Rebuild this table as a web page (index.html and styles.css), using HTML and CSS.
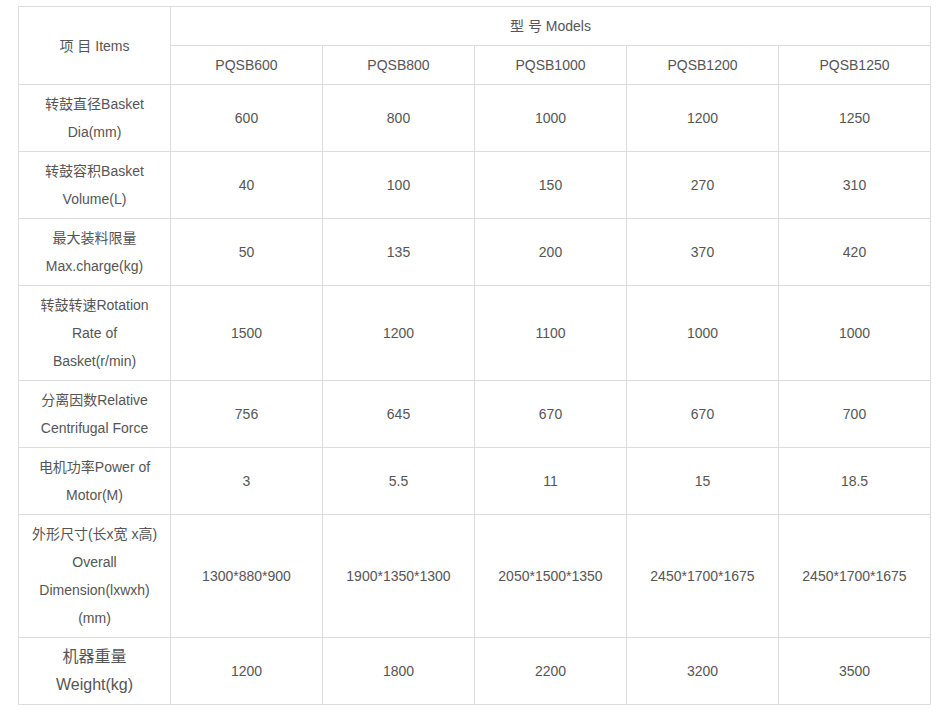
FILE: index.html
```html
<!DOCTYPE html>
<html lang="zh">
<head>
<meta charset="utf-8">
<title>Specs</title>
<link rel="stylesheet" href="styles.css">
</head>
<body>
<table class="spec">
  <colgroup>
    <col class="c"><col class="c"><col class="c"><col class="c"><col class="c"><col class="c">
  </colgroup>
  <tr>
    <td rowspan="2">项 目 Items</td>
    <td colspan="5">型 号 Models</td>
  </tr>
  <tr>
    <td>PQSB600</td><td>PQSB800</td><td>PQSB1000</td><td>PQSB1200</td><td>PQSB1250</td>
  </tr>
  <tr>
    <td>转鼓直径Basket<br>Dia(mm)</td>
    <td>600</td><td>800</td><td>1000</td><td>1200</td><td>1250</td>
  </tr>
  <tr>
    <td>转鼓容积Basket<br>Volume(L)</td>
    <td>40</td><td>100</td><td>150</td><td>270</td><td>310</td>
  </tr>
  <tr>
    <td>最大装料限量<br>Max.charge(kg)</td>
    <td>50</td><td>135</td><td>200</td><td>370</td><td>420</td>
  </tr>
  <tr>
    <td>转鼓转速Rotation<br>Rate of<br>Basket(r/min)</td>
    <td>1500</td><td>1200</td><td>1100</td><td>1000</td><td>1000</td>
  </tr>
  <tr>
    <td>分离因数Relative<br>Centrifugal Force</td>
    <td>756</td><td>645</td><td>670</td><td>670</td><td>700</td>
  </tr>
  <tr>
    <td>电机功率Power of<br>Motor(M)</td>
    <td>3</td><td>5.5</td><td>11</td><td>15</td><td>18.5</td>
  </tr>
  <tr>
    <td>外形尺寸(长x宽 x高)<br>Overall<br>Dimension(lxwxh)<br>(mm)</td>
    <td>1300*880*900</td><td>1900*1350*1300</td><td>2050*1500*1350</td><td>2450*1700*1675</td><td>2450*1700*1675</td>
  </tr>
  <tr>
    <td class="big">机器重量<br>Weight(kg)</td>
    <td>1200</td><td>1800</td><td>2200</td><td>3200</td><td>3500</td>
  </tr>
</table>
</body>
</html>
```

FILE: styles.css
```css
html, body {
  margin: 0;
  padding: 0;
  background: #fff;
}
body {
  padding: 6px 0 0 18px;
  font-family: "Liberation Sans", Arial, "Noto Sans CJK SC", sans-serif;
  font-size: 14px;
  color: #555;
}
.spec {
  border-collapse: collapse;
  table-layout: fixed;
  width: 913px;
}
.spec .c {
  width: 152px;
}
.spec td {
  border: 1px solid #ddd;
  padding: 5px 4px;
  line-height: 28px;
  text-align: center;
  vertical-align: middle;
  white-space: nowrap;
}
.spec td.big {
  font-size: 16px;
}
```
